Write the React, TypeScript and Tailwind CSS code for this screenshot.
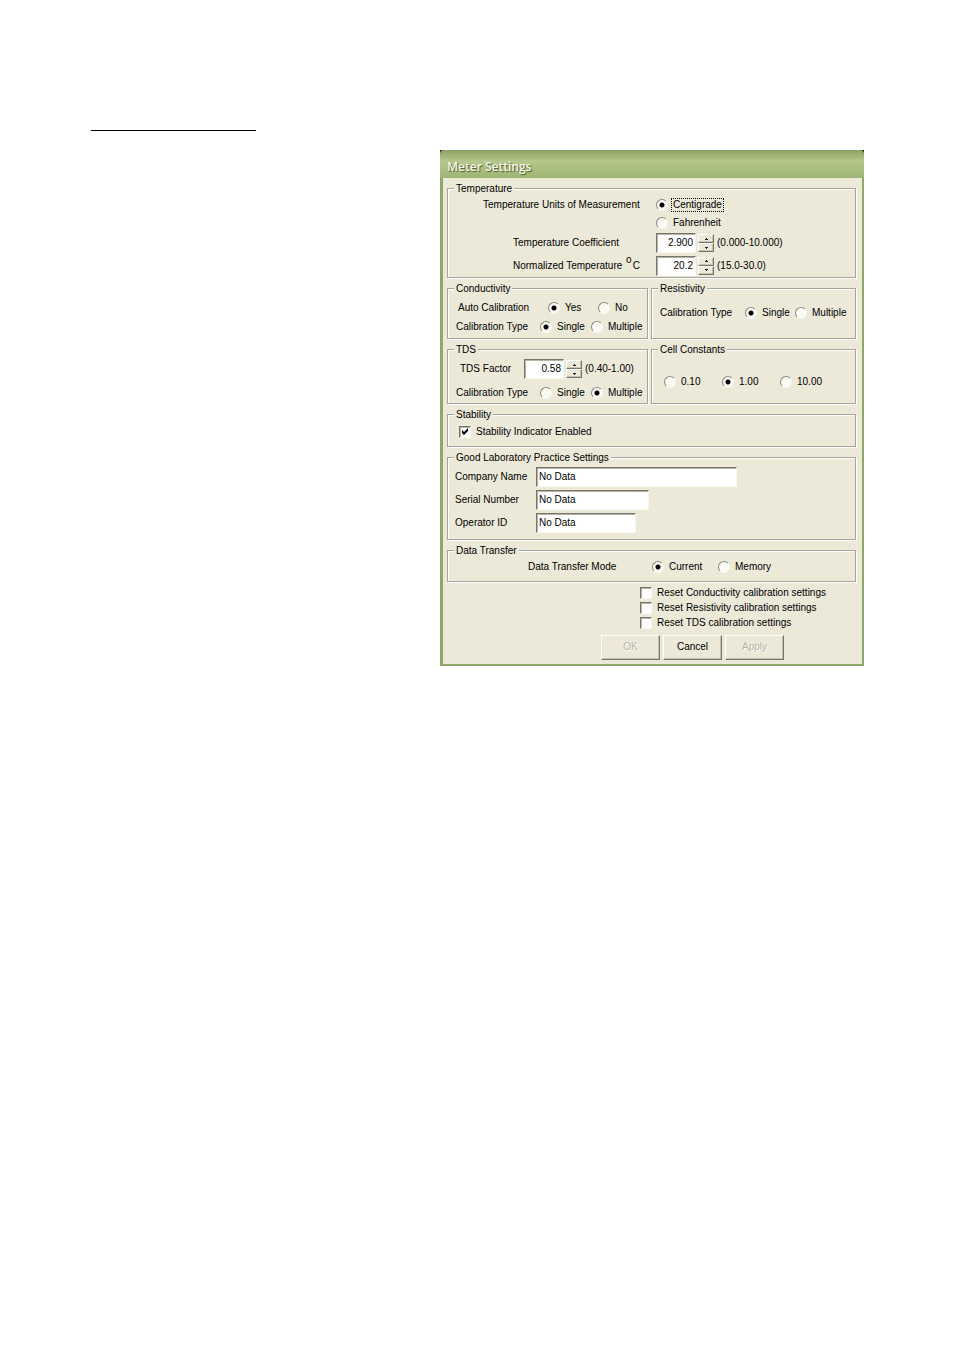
import { useId, useState, type ReactNode } from "react";
import clsx from "clsx";

const sunken =
  "border border-t-[#77756a] border-l-[#77756a] border-r-[#f8f7f0] border-b-[#f8f7f0] bg-white shadow-[inset_1px_1px_0_#b5b3a6]";
const raised =
  "border border-t-white border-l-white border-r-[#77756a] border-b-[#77756a] bg-[#ece9d8] shadow-[inset_-1px_-1px_0_#c5c2b2]";

function Group({
  title,
  className,
  children,
}: {
  title: string;
  className?: string;
  children: ReactNode;
}) {
  return (
    <fieldset
      className={clsx(
        "min-w-0 border border-[#a5a498] shadow-[1px_1px_0_#fff,inset_1px_1px_0_#fff]",
        className,
      )}
    >
      <legend className="ml-[6px] h-3 bg-[#ece9d8] px-[2px] leading-[14px]">{title}</legend>
      {children}
    </fieldset>
  );
}

function RadioSet({
  label,
  options,
  initial,
  labelClass,
  optionClass,
  className,
}: {
  label: string;
  options: string[];
  initial: string;
  labelClass?: string;
  optionClass?: string;
  className?: string;
}) {
  const name = useId();
  const [value, setValue] = useState(initial);

  return (
    <div role="radiogroup" aria-label={label} className={clsx("flex items-center", className)}>
      {labelClass && <span className={clsx("shrink-0", labelClass)}>{label}</span>}
      {options.map((option) => (
        <Radio
          key={option}
          name={name}
          label={option}
          checked={value === option}
          onChange={() => setValue(option)}
          className={optionClass}
        />
      ))}
    </div>
  );
}

function Radio({
  name,
  label,
  checked,
  onChange,
  focused,
  className,
}: {
  name: string;
  label: string;
  checked: boolean;
  onChange: () => void;
  focused?: boolean;
  className?: string;
}) {
  return (
    <label className={clsx("flex shrink-0 items-center", className)}>
      <input
        type="radio"
        name={name}
        checked={checked}
        onChange={onChange}
        className="size-3 shrink-0 appearance-none rounded-full border border-t-[#8a887c] border-r-[#f8f7f0] border-b-[#f8f7f0] border-l-[#8a887c] bg-[#fbfaf5] checked:bg-[radial-gradient(circle,#000_2px,#fbfaf5_3px)]"
      />
      <span
        className={clsx(
          "ml-[3px] border px-px leading-3",
          focused ? "border-dotted border-black" : "border-transparent",
        )}
      >
        {label}
      </span>
    </label>
  );
}

function Spinner({
  id,
  initial,
  step,
  digits,
  range,
}: {
  id: string;
  initial: string;
  step: number;
  digits: number;
  range: string;
}) {
  const [value, setValue] = useState(initial);
  const bump = (delta: number) => setValue((Number(value) + delta).toFixed(digits));

  return (
    <div className="flex items-center">
      <input
        id={id}
        type="text"
        value={value}
        onChange={(e) => setValue(e.target.value)}
        className={clsx("h-5 w-10 pr-[2px] pb-px text-right outline-none", sunken)}
      />
      <div className="mx-[2px] flex flex-col">
        <button
          type="button"
          aria-label="Increase"
          onClick={() => bump(step)}
          className={clsx("flex h-[9px] w-4 items-center justify-center", raised)}
        >
          <svg width="3" height="2" viewBox="0 0 3 2">
            <path d="M1 0h1v1h1v1H0V1h1z" fill="#222" />
          </svg>
        </button>
        <button
          type="button"
          aria-label="Decrease"
          onClick={() => bump(-step)}
          className={clsx("flex h-[9px] w-4 items-center justify-center", raised)}
        >
          <svg width="3" height="2" viewBox="0 0 3 2">
            <path d="M0 0h3v1H2v1H1V1H0z" fill="#222" />
          </svg>
        </button>
      </div>
      <span className="pl-px">{range}</span>
    </div>
  );
}

function Checkbox({
  label,
  defaultChecked,
  className,
}: {
  label: string;
  defaultChecked?: boolean;
  className?: string;
}) {
  const [checked, setChecked] = useState(!!defaultChecked);

  return (
    <label className={clsx("flex items-center gap-[5px]", className)}>
      <span className="grid shrink-0">
        <input
          type="checkbox"
          checked={checked}
          onChange={(e) => setChecked(e.target.checked)}
          className={clsx("col-start-1 row-start-1 size-3 appearance-none", sunken)}
        />
        {checked && (
          <svg
            className="pointer-events-none col-start-1 row-start-1"
            width="12"
            height="12"
            viewBox="0 0 12 12"
          >
            <path d="M3 4v3l2 2 4-4V2L5 6z" fill="#000" />
          </svg>
        )}
      </span>
      {label}
    </label>
  );
}

function TextField({
  label,
  inputClass,
}: {
  label: string;
  inputClass: string;
}) {
  const id = useId();
  return (
    <div className="flex h-5 items-center">
      <label htmlFor={id} className="w-[81px] shrink-0">
        {label}
      </label>
      <input
        id={id}
        type="text"
        defaultValue="No Data"
        className={clsx("h-5 pb-[2px] pl-[2px] outline-none", sunken, inputClass)}
      />
    </div>
  );
}

function PushButton({ label, disabled }: { label: string; disabled?: boolean }) {
  return (
    <button
      type="button"
      disabled={disabled}
      className={clsx(
        "h-[25px] w-[59px] pb-px disabled:text-[#b5b2a2] disabled:[text-shadow:1px_1px_0_#fff]",
        raised,
      )}
    >
      {label}
    </button>
  );
}

export default function App() {
  const [units, setUnits] = useState("Centigrade");

  return (
    <main className="min-h-screen bg-white pt-[130px] pr-[90px] pl-[91px] font-['Liberation_Sans',Arial,sans-serif] text-[10px] leading-3 text-black">
      <hr className="w-[165px] border-t border-black" />

      <section
        aria-labelledby="dialog-title"
        className="mt-[19px] ml-[349px] border-r-2 border-b-2 border-l-[3px] border-[#8fa869] bg-[#ece9d8]"
      >
        <header className="-mr-[2px] -ml-[3px] bg-[#1c2410]">
          <div className="flex h-7 items-center rounded-t-[4px] bg-linear-to-b from-[#8ba063] via-[#b5c78a] via-40% to-[#9db574] pt-[5px] pl-[7px]">
            <h1
              id="dialog-title"
              className="font-['Open_Sans','Noto_Sans',sans-serif] text-[12px] font-semibold text-[#f4f6ec] [text-shadow:1px_1px_1px_#4d5c2c]"
            >
              Meter Settings
            </h1>
          </div>
        </header>

        <form
          onSubmit={(e) => e.preventDefault()}
          className="flex flex-col gap-1 pt-1 pr-[6px] pb-1 pl-1"
        >
          <Group title="Temperature">
            <div className="pt-[2px]">
              <div className="flex">
                <span className="w-[208px] shrink-0 pt-[3px] pl-[35px] whitespace-nowrap">
                  Temperature Units of Measurement
                </span>
                <div role="radiogroup" aria-label="Temperature Units of Measurement">
                  {["Centigrade", "Fahrenheit"].map((unit) => (
                    <Radio
                      key={unit}
                      name="units"
                      label={unit}
                      checked={units === unit}
                      focused={units === unit}
                      onChange={() => setUnits(unit)}
                      className="h-[18px]"
                    />
                  ))}
                </div>
              </div>
              <div className="flex h-[22px] items-center">
                <label htmlFor="coefficient" className="w-[208px] shrink-0 pl-[65px]">
                  Temperature Coefficient
                </label>
                <Spinner id="coefficient" initial="2.900" step={0.001} digits={3} range="(0.000-10.000)" />
              </div>
              <div className="flex h-[23px] items-center">
                <label htmlFor="normalized" className="w-[208px] shrink-0 pl-[65px]">
                  Normalized Temperature <sup className="-top-[6px] mx-px text-[10px]">o</sup>C
                </label>
                <Spinner id="normalized" initial="20.2" step={0.1} digits={1} range="(15.0-30.0)" />
              </div>
            </div>
          </Group>

          <div className="grid grid-cols-[201fr_205fr] gap-[3px]">
            <Group title="Conductivity">
              <div className="flex flex-col gap-px pt-[5px] pb-[2px]">
                <RadioSet
                  label="Auto Calibration"
                  options={["Yes", "No"]}
                  initial="Yes"
                  className="h-[18px] pl-[10px]"
                  labelClass="w-[90px]"
                  optionClass="w-[50px]"
                />
                <RadioSet
                  label="Calibration Type"
                  options={["Single", "Multiple"]}
                  initial="Single"
                  className="h-[18px] pl-2"
                  labelClass="w-[84px]"
                  optionClass="w-[51px]"
                />
              </div>
            </Group>
            <Group title="Resistivity">
              <RadioSet
                label="Calibration Type"
                options={["Single", "Multiple"]}
                initial="Single"
                className="h-[38px] pl-2"
                labelClass="w-[85px]"
                optionClass="w-[50px]"
              />
            </Group>
          </div>

          <div className="grid grid-cols-[201fr_205fr] gap-[3px]">
            <Group title="TDS">
              <div className="flex h-12 flex-col gap-1 pt-[3px]">
                <div className="flex h-[22px] items-center pl-3">
                  <label htmlFor="tds-factor" className="w-16 shrink-0">
                    TDS Factor
                  </label>
                  <Spinner id="tds-factor" initial="0.58" step={0.01} digits={2} range="(0.40-1.00)" />
                </div>
                <RadioSet
                  label="Calibration Type"
                  options={["Single", "Multiple"]}
                  initial="Multiple"
                  className="h-[18px] pl-2"
                  labelClass="w-[84px]"
                  optionClass="w-[51px]"
                />
              </div>
            </Group>
            <Group title="Cell Constants">
              <RadioSet
                label="Cell Constants"
                options={["0.10", "1.00", "10.00"]}
                initial="1.00"
                className="h-12 pt-[5px] pl-3"
                optionClass="w-[58px]"
              />
            </Group>
          </div>

          <Group title="Stability">
            <Checkbox label="Stability Indicator Enabled" defaultChecked className="h-[26px] pb-[3px] pl-[11px]" />
          </Group>

          <Group title="Good Laboratory Practice Settings">
            <div className="flex flex-col gap-[3px] pt-1 pb-[6px] pl-[7px]">
              <TextField label="Company Name" inputClass="w-[201px]" />
              <TextField label="Serial Number" inputClass="w-[113px]" />
              <TextField label="Operator ID" inputClass="w-[100px]" />
            </div>
          </Group>

          <Group title="Data Transfer">
            <RadioSet
              label="Data Transfer Mode"
              options={["Current", "Memory"]}
              initial="Current"
              className="h-[25px] pb-1 pl-20"
              labelClass="w-[124px]"
              optionClass="w-[66px]"
            />
          </Group>

          <div className="-mt-px pl-[193px]">
            <Checkbox label="Reset Conductivity calibration settings" className="h-[15px]" />
            <Checkbox label="Reset Resistivity calibration settings" className="h-[15px]" />
            <Checkbox label="Reset TDS calibration settings" className="h-[15px]" />
          </div>

          <div className="flex gap-[3px] pt-px pl-[154px]">
            <PushButton label="OK" disabled />
            <PushButton label="Cancel" />
            <PushButton label="Apply" disabled />
          </div>
        </form>
      </section>
    </main>
  );
}
